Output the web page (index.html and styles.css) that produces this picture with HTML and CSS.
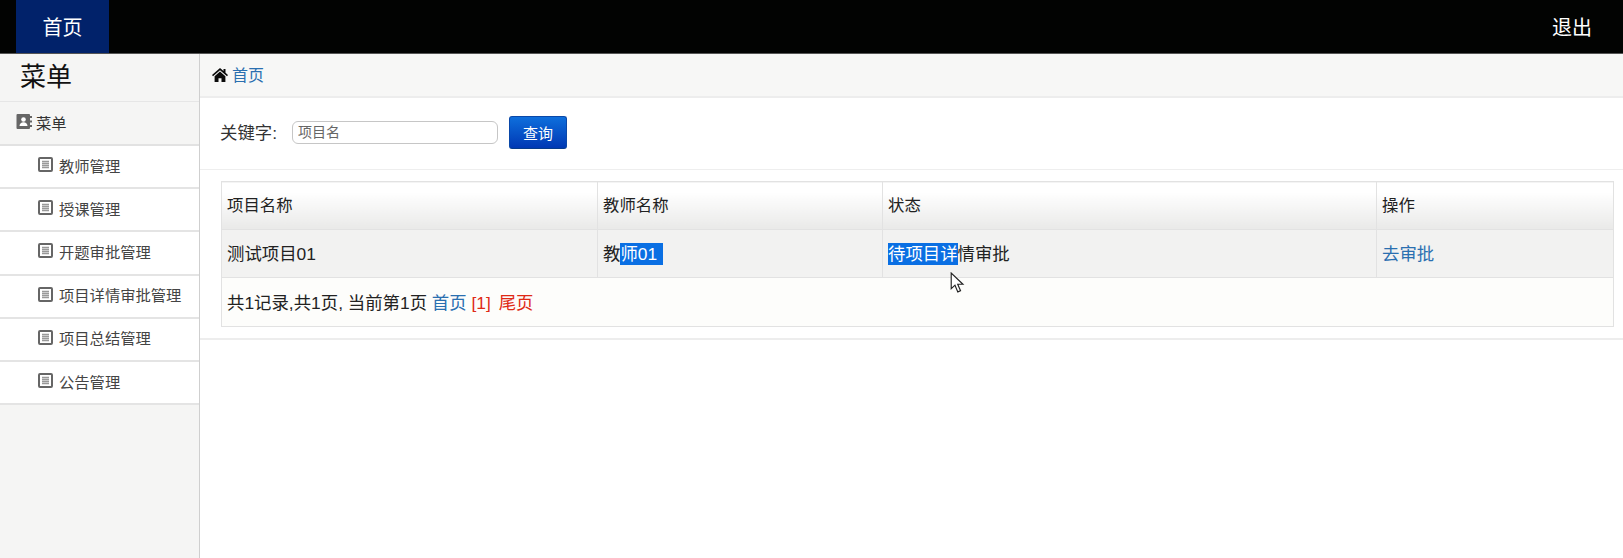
FILE: index.html
```html
<!DOCTYPE html>
<html lang="zh-CN">
<head>
<meta charset="utf-8">
<title>首页</title>
<link rel="stylesheet" href="styles.css">
</head>
<body>
<svg class="defs" width="0" height="0" aria-hidden="true">
  <symbol id="doc" viewBox="0 0 15 15">
    <rect x="1" y="1" width="13" height="13" rx="1" fill="#fff" stroke="#666" stroke-width="2"/>
    <path d="M4 4.500h7M4 6.500h7M4 8.500h7M4 10.500h7" stroke="#999" stroke-width="1.300"/>
  </symbol>
</svg>
<header class="topbar">
  <a class="tab" href="#">首页</a>
  <a class="logout" href="#">退出</a>
</header>
<div class="layout">
  <aside class="sidebar">
    <div class="brand">菜单</div>
    <div class="side-head">
      <svg class="contact" viewBox="0 0 16 15" width="16" height="15"><path fill="#666" d="M1.500 0H13a1 1 0 0 1 1 1v13a1 1 0 0 1-1 1H1.500a1 1 0 0 1-1-1V1a1 1 0 0 1 1-1z"/><path fill="#666" d="M14 2h2v2h-2zM14 6.500h2v2h-2zM14 11h2v2h-2z"/><circle cx="7.500" cy="5.500" r="2.300" fill="#fff"/><path fill="#fff" d="M3.500 12c0-2.500 1.800-3.800 4-3.800s4 1.300 4 3.800z"/></svg>
      <span>菜单</span>
    </div>
    <ul class="side-list">
      <li><svg class="doc"><use href="#doc"/></svg><span>教师管理</span></li>
      <li><svg class="doc"><use href="#doc"/></svg><span>授课管理</span></li>
      <li><svg class="doc"><use href="#doc"/></svg><span>开题审批管理</span></li>
      <li><svg class="doc"><use href="#doc"/></svg><span>项目详情审批管理</span></li>
      <li><svg class="doc"><use href="#doc"/></svg><span>项目总结管理</span></li>
      <li><svg class="doc"><use href="#doc"/></svg><span>公告管理</span></li>
    </ul>
  </aside>
  <main class="content">
    <nav class="crumb">
      <svg class="home" viewBox="0 0 16 14" width="16" height="14"><path fill="#0b0b0b" d="M8 0 0 7l1 1.200L8 2.300l7 5.900L16 7l-2.500-2.200V1h-2v2L8 0z"/><path fill="#0b0b0b" d="M8 3.600 2.600 8.200V14h3.900v-3.800h3V14h3.900V8.200z"/></svg>
      <a href="#">首页</a>
    </nav>
    <form class="filter">
      <label class="filter-label">关键字:</label>
      <input class="keyword" type="text" placeholder="项目名">
      <button class="search" type="button">查询</button>
    </form>
    <section class="table-wrap">
      <table class="grid">
        <colgroup><col class="c1"><col class="c2"><col class="c3"><col class="c4"></colgroup>
        <thead>
          <tr><th>项目名称</th><th>教师名称</th><th>状态</th><th>操作</th></tr>
        </thead>
        <tbody>
          <tr class="data">
            <td>测试项目01</td>
            <td>教<span class="sel sel-pad">师01</span></td>
            <td class="status"><span class="sel">待项目详</span>情审批<svg class="cursor" viewBox="0 0 14 21" width="15" height="22"><path d="M1 1v15l3.600-3.400 2.700 6.400 2.600-1.100-2.700-6.200h5z" fill="#fff" stroke="#222" stroke-width="1.100"/></svg></td>
            <td><a href="#">去审批</a></td>
          </tr>
          <tr class="foot">
            <td colspan="4">共1记录,共1页, 当前第1页 <a href="#">首页</a> <span class="red">[1] 尾页</span></td>
          </tr>
        </tbody>
      </table>
    </section>
  </main>
</div>
</body>
</html>
```
FILE: styles.css
```css
* { box-sizing: border-box; }
html, body { margin: 0; height: 100%; }
body {
  font-family: "Liberation Sans", "Noto Sans CJK SC", sans-serif;
  font-size: 17.4px;
  color: #222;
  background: #fff;
  overflow: hidden;
}
a { color: #2a6fb0; text-decoration: none; }
.defs { position: absolute; }

.topbar {
  height: 54px;
  background: #020302;
  border-bottom: 1px solid #555;
  display: flex;
  justify-content: space-between;
  align-items: stretch;
  padding: 0 31px 0 16px;
}
.tab {
  width: 93px;
  background: #01226a;
  color: #fff;
  font-size: 20px;
  display: flex;
  align-items: center;
  justify-content: center;
}
.logout {
  color: #fff;
  font-size: 20px;
  display: flex;
  align-items: center;
}

.layout { display: flex; height: 504px; }
.sidebar {
  width: 200px;
  background: #f5f5f4;
  border-right: 1px solid #cfcfcf;
  flex: none;
}
.brand {
  height: 48px;
  padding-left: 20px;
  font-size: 26px;
  line-height: 47px;
  color: #111;
  border-bottom: 1px solid #e6e6e6;
}
.side-head {
  height: 44px;
  display: flex;
  align-items: center;
  gap: 4px;
  padding-left: 16px;
  padding-bottom: 2px;
  font-size: 15.300px;
  color: #333;
  border-bottom: 2px solid #e2e2e2;
}
.side-list { list-style: none; margin: 0; padding: 0; }
.side-list li {
  height: 43.200px;
  display: flex;
  align-items: center;
  gap: 6px;
  padding-left: 38px;
  padding-bottom: 4px;
  font-size: 15.300px;
  color: #444;
  background: #fff;
  border-bottom: 2px solid #e4e4e4;
}
.doc { width: 15px; height: 15px; flex: none; }
.contact { flex: none; margin-top: -1px; }

.content { flex: 1; min-width: 0; }
.crumb {
  height: 44px;
  background: #f7f7f6;
  border-bottom: 2px solid #ededed;
  display: flex;
  align-items: center;
  gap: 4px;
  padding-left: 12px;
  padding-bottom: 2px;
  font-size: 16px;
}
.home { flex: none; margin-top: 1px; }

.filter {
  height: 72px;
  display: flex;
  align-items: center;
  padding: 0 0 2px 20px;
  border-bottom: 1px solid #eee;
}
.filter-label { width: 72px; font-size: 17.400px; color: #333; line-height: 24px; }
.keyword {
  width: 206px;
  height: 23px;
  margin-bottom: 1px;
  border: 1px solid #c6c6c6;
  border-radius: 6px;
  padding: 0 5px;
  font: 14px "Liberation Sans", "Noto Sans CJK SC", sans-serif;
  outline: none;
}
.keyword::placeholder { color: #666; opacity: 1; }
.search {
  margin-left: 11px;
  margin-bottom: 1px;
  width: 58px;
  height: 33px;
  border: 1px solid #0a48a8;
  border-bottom-color: #063b8c;
  border-radius: 3px;
  background: linear-gradient(#0e6fdc, #0038b4);
  color: #fff;
  font: 15px "Liberation Sans", "Noto Sans CJK SC", sans-serif;
  padding: 0;
}

.table-wrap {
  padding: 11px 9px 11px 21px;
  border-bottom: 2px solid #ededed;
}
.grid {
  width: 100%;
  table-layout: fixed;
  border-collapse: collapse;
  border: 1px solid #dcdcdc;
}
.c1 { width: 376px; }
.c2 { width: 285px; }
.c3 { width: 494px; }
.grid th, .grid td {
  height: 48px;
  padding: 0 5px 2px;
  text-align: left;
  font-weight: 400;
  border: 1px solid #e2e2e2;
  color: #222;
}
.grid th {
  font-size: 16.400px;
  padding-bottom: 4px;
  background: linear-gradient(#fff 20%, #e9e9e8);
}
.data td { background: #f2f2f1; }
.grid .foot td { height: 49px; padding-bottom: 1px; background: #fdfdfb; }
.grid a { color: #2a6fb0; }
.red { color: #df2a16; word-spacing: 3px; }
.sel { background: #0a6fe3; color: #fff; display: inline-block; line-height: 22px; }
.sel-pad { padding-right: 6px; }
.status { position: relative; }
.cursor { position: absolute; left: 67px; top: 42px; }
```
